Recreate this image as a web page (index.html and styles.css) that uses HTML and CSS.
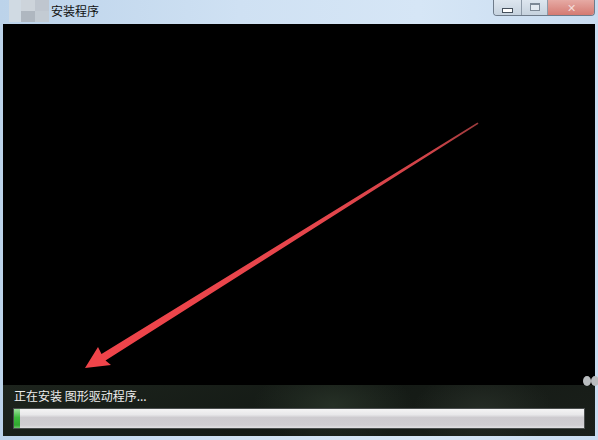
FILE: index.html
```html
<!DOCTYPE html>
<html>
<head>
<meta charset="utf-8">
<link rel="stylesheet" href="styles.css">
</head>
<body>
<div class="window">
  <div class="titlebar">
    <div class="icon-blur">
      <span class="b b1"></span><span class="b b2"></span><span class="b b3"></span><span class="b b4"></span>
    </div>
    <div class="title">安装程序</div>
    <div class="controls">
      <div class="btn min"><span class="min-glyph"></span></div>
      <div class="btn max"><span class="max-glyph"></span></div>
      <div class="btn close">✕</div>
    </div>
  </div>
  <div class="content">
    <svg class="arrow" width="592" height="361" viewBox="0 0 592 361">
      <defs>
        <linearGradient id="ag" x1="475" y1="99" x2="90" y2="340" gradientUnits="userSpaceOnUse">
          <stop offset="0" stop-color="#9a3a3c"/>
          <stop offset="0.12" stop-color="#cf4348"/>
          <stop offset="0.4" stop-color="#e5464c"/>
          <stop offset="1" stop-color="#f0444a"/>
        </linearGradient>
      </defs>
      <polygon fill="url(#ag)" points="82,344 108,341 102.5,336.5 475.5,99.8 474.5,98.6 98.5,330 95,323"/>
    </svg>
  </div>
  <div class="status">
    <div class="status-text">正在安装 图形驱动程序...</div>
    <div class="progress"><div class="fill" style="width:6px"></div></div>
  </div>
  <div class="dots"><span></span><span></span></div>
</div>
</body>
</html>
```

FILE: styles.css
```css
html, body {
  margin: 0;
  padding: 0;
  background: #c6dbf0;
}
.window {
  position: relative;
  width: 598px;
  height: 440px;
  box-sizing: border-box;
  padding: 0 3px 4px 3px;
  display: flex;
  flex-direction: column;
  background: linear-gradient(to right, #bcd3ea, #cfe1f3 40%, #d6e6f6 70%, #c9dcf0);
  font-family: "Noto Sans CJK SC", "Microsoft YaHei", sans-serif;
  overflow: hidden;
}
.titlebar {
  height: 24px;
  display: flex;
  align-items: flex-start;
  flex-shrink: 0;
}
.icon-blur {
  width: 40px;
  height: 22px;
  margin-left: 6px;
  display: grid;
  grid-template-columns: 12px 14px 14px;
  grid-template-rows: 11px 11px;
  background: #d3dbe3;
  opacity: 0.9;
}
.b { display: block; }
.b1 { background: #cfd4da; grid-column: 2; grid-row: 1; }
.b2 { background: #bfc5cc; grid-column: 3; grid-row: 1; }
.b3 { background: #aeb4bc; grid-column: 2; grid-row: 2; }
.b4 { background: #c4cad1; grid-column: 3; grid-row: 2; }
.title {
  margin-left: 2px;
  margin-top: 3px;
  font-size: 12px;
  line-height: 16px;
  color: #111;
}
.controls {
  margin-left: auto;
  display: flex;
  height: 15px;
  border: 1px solid #6e7b8a;
  border-top: none;
  border-radius: 0 0 4px 4px;
  overflow: hidden;
  margin-right: 0;
}
.btn {
  height: 15px;
  display: flex;
  align-items: center;
  justify-content: center;
  box-sizing: border-box;
}
.min {
  width: 28px;
  background: linear-gradient(#dde6ef, #c6d2de);
  border-right: 1px solid #8d9aa8;
}
.max {
  width: 26px;
  background: linear-gradient(#dde6ef, #c6d2de);
  border-right: 1px solid #8d9aa8;
}
.close {
  width: 46px;
  background: linear-gradient(#e6aaa4, #d47a72);
  color: #f3dcd8;
  font-size: 11px;
  line-height: 15px;
}
.min-glyph {
  width: 9px;
  height: 3px;
  margin-top: 6px;
  background: #fff;
  border: 1px solid #45505c;
}
.max-glyph {
  width: 8px;
  height: 5px;
  margin-bottom: 2px;
  border: 1px solid #7d8996;
  border-top-width: 2px;
  background: #e4ebf2;
}
.content {
  flex: 1;
  background: #000;
  min-height: 0;
}
.arrow { display: block; }
.status {
  height: 51px;
  flex-shrink: 0;
  box-sizing: border-box;
  padding: 4px 10px 0 10px;
  background: radial-gradient(ellipse 80px 40px at 330px 20px, #263026, transparent),
              radial-gradient(ellipse 70px 40px at 480px 25px, #252c25, transparent),
              linear-gradient(160deg, #1d241d, #141a15 50%, #1a1f1a);
}
.status-text {
  color: #ececec;
  font-size: 12px;
  line-height: 14px;
  padding-left: 1px;
}
.progress {
  margin-top: 5px;
  height: 21px;
  box-sizing: border-box;
  border: 1px solid #4a4e4e;
  background: linear-gradient(#f4f4f4, #e8e8ea 30%, #cdcbcf 45%, #cfcdd1 85%, #e1e1e3);
  display: flex;
}
.fill {
  height: 100%;
  background: linear-gradient(#9ee29e, #3dbb3d 45%, #2fa82f 85%, #6dc96d);
}
.dots {
  position: absolute;
  left: 583px;
  top: 376px;
  display: flex;
}
.dots span {
  width: 8px;
  height: 10px;
  border-radius: 50%;
  background: #b9bcbf;
}
```
